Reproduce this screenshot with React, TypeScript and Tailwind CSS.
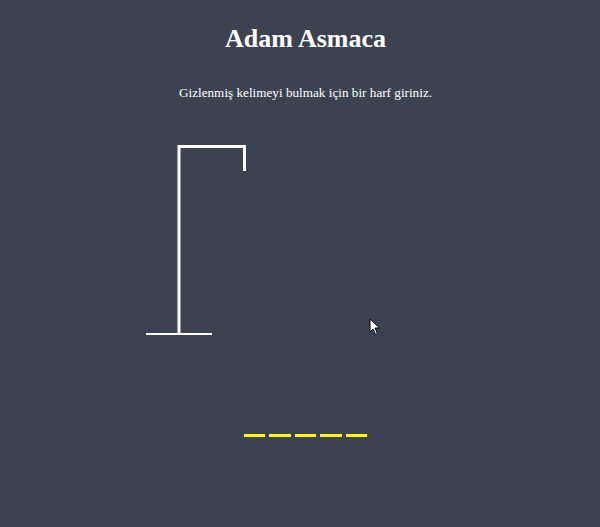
export default function App() {
  const slots = [0, 1, 2, 3, 4]

  return (
    <div
      className="relative min-h-[527px] w-full bg-[#3c4350] pl-[11px] text-white"
      style={{ fontFamily: '"Liberation Serif", "Times New Roman", serif' }}
    >
      <div className="flex flex-col items-center">
        <h1 className="mt-[24px] text-[26px] font-bold leading-[30px]">Adam Asmaca</h1>
        <p className="mt-[31px] text-[13.2px] leading-[16px]">
          Gizlenmiş kelimeyi bulmak için bir harf giriniz.
        </p>

        <svg width="320" height="200" className="mt-[44px]" viewBox="0 0 320 200">
          {/* base */}
          <line x1="0" y1="189" x2="66" y2="189" stroke="white" strokeWidth="2" />
          {/* pole */}
          <line x1="33" y1="0" x2="33" y2="188" stroke="white" strokeWidth="3" />
          {/* beam */}
          <line x1="32" y1="1.5" x2="100" y2="1.5" stroke="white" strokeWidth="3" />
          {/* rope */}
          <line x1="98.5" y1="0" x2="98.5" y2="26" stroke="white" strokeWidth="3" />
        </svg>

        <div className="mt-[89px] flex gap-[4px]">
          {slots.map((i) => (
            <span key={i} className="h-[3px] w-[21.5px] bg-[#ffff00]" />
          ))}
        </div>
      </div>

      <svg
        className="absolute left-[369px] top-[318px]"
        width="12"
        height="18"
        viewBox="0 0 12 18"
      >
        <path
          d="M1 1 L1 14 L4 11 L6.5 16.5 L8.5 15.5 L6 10 L10.5 10 Z"
          fill="white"
          stroke="black"
          strokeWidth="1"
          strokeLinejoin="round"
        />
      </svg>
    </div>
  )
}
